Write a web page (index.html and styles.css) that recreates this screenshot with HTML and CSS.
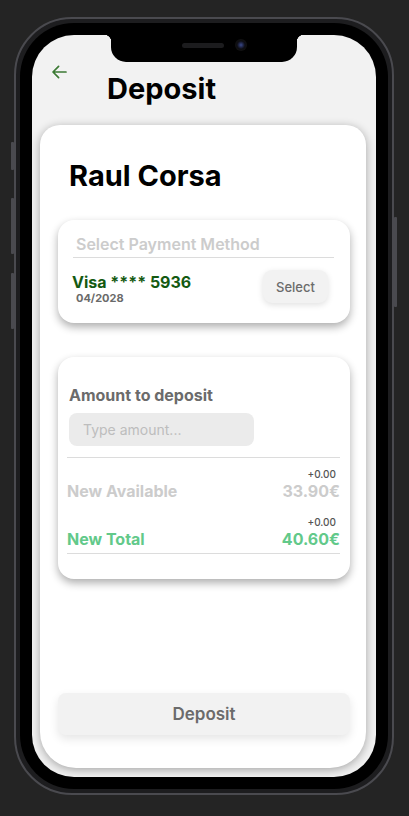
FILE: index.html
```html
<!DOCTYPE html>
<html lang="en">
<head>
<meta charset="utf-8">
<title>Deposit</title>
<link rel="stylesheet" href="styles.css">
</head>
<body>
<div class="phone">
  <span class="side-btn side-l1"></span>
  <span class="side-btn side-l2"></span>
  <span class="side-btn side-l3"></span>
  <span class="side-btn side-r1"></span>
  <div class="bezel">
    <div class="screen">
      <div class="notch"><span class="speaker"></span><span class="camera"></span></div>
      <header class="header">
        <svg class="back" viewBox="0 0 16 14" width="16" height="14" aria-hidden="true">
          <path d="M15 7H2.2M7.6 1.4 2 7l5.6 5.6" fill="none" stroke="#3c7a34" stroke-width="1.7" stroke-linecap="round" stroke-linejoin="round"/>
        </svg>
        <h1 class="title">Deposit</h1>
      </header>
      <main class="panel">
        <h2 class="name">Raul Corsa</h2>
        <section class="card pay">
          <div class="pay-label">Select Payment Method</div>
          <div class="divider pay-div"></div>
          <div class="pay-row">
            <div class="pay-info">
              <div class="visa">Visa **** 5936</div>
              <div class="exp">04/2028</div>
            </div>
            <button class="select-btn">Select</button>
          </div>
        </section>
        <section class="card amount">
          <div class="amount-label">Amount to deposit</div>
          <input class="amount-input" type="text" placeholder="Type amount...">
          <div class="divider div-a"></div>
          <div class="sum-row avail">
            <span class="sum-label">New Available</span>
            <span class="sum-right"><span class="delta">+0.00</span><span class="sum-val">33.90€</span></span>
          </div>
          <div class="sum-row total">
            <span class="sum-label">New Total</span>
            <span class="sum-right"><span class="delta">+0.00</span><span class="sum-val">40.60€</span></span>
          </div>
          <div class="divider div-b"></div>
        </section>
        <button class="deposit-btn">Deposit</button>
      </main>
    </div>
  </div>
</div>
</body>
</html>
```
FILE: styles.css
```css
* { box-sizing: border-box; }
html, body { margin: 0; padding: 0; }
body {
  background: #242424;
  font-family: Inter, "Noto Sans", "Liberation Sans", sans-serif;
  width: 409px;
  height: 816px;
  overflow: hidden;
}
.phone {
  position: relative;
  margin: 17px 0 0 14px;
  width: 380px;
  height: 778px;
  border: 2px solid #4a4a4f;
  border-radius: 58px;
  background: #1d1d1f;
  padding: 4px;
}
.side-btn {
  position: absolute;
  width: 3px;
  background: #4a4a4f;
  border-radius: 1px;
}
.side-l1 { left: -5px; top: 123px; height: 28px; }
.side-l2 { left: -5px; top: 179px; height: 56px; }
.side-l3 { left: -5px; top: 254px; height: 56px; }
.side-r1 { right: -5px; top: 198px; height: 90px; }
.bezel {
  width: 368px;
  height: 766px;
  background: #000;
  border-radius: 54px;
  padding: 12px;
}
.screen {
  position: relative;
  width: 344px;
  height: 742px;
  background: #f2f2f2;
  border-radius: 42px;
  overflow: hidden;
  display: flex;
  flex-direction: column;
  padding: 30px 10px 9px 8px;
}
.notch {
  position: absolute;
  left: 79px;
  top: 0;
  width: 186px;
  height: 27px;
  background: #000;
  border-radius: 0 0 15px 15px;
}
.notch::before, .notch::after {
  content: "";
  position: absolute;
  top: 0;
  width: 7px;
  height: 7px;
}
.notch::before { left: -7px; background: radial-gradient(circle at 0 100%, transparent 7px, #000 7.5px); }
.notch::after { right: -7px; background: radial-gradient(circle at 100% 100%, transparent 7px, #000 7.5px); }
.speaker {
  position: absolute;
  left: 71px;
  top: 8px;
  width: 42px;
  height: 5px;
  border-radius: 3px;
  background: #1c1c1e;
}
.camera {
  position: absolute;
  left: 124px;
  top: 4px;
  width: 12px;
  height: 12px;
  border-radius: 50%;
  background: radial-gradient(circle at 50% 50%, #3a4a8a 0, #1d2240 2.5px, #0d0d12 4px, #111 6px);
}
.header {
  display: flex;
  align-items: flex-start;
  padding-left: 11px;
  height: 60px;
}
.back { display: block; flex: none; }
.title {
  margin: 6px 0 0 40px;
  font-size: 29px;
  line-height: 35px;
  font-weight: 700;
  color: #000;
}
.panel {
  flex: 1;
  background: #fff;
  border-radius: 20px 20px 36px 36px;
  box-shadow: 0 2px 10px rgba(0,0,0,0.32);
  display: flex;
  flex-direction: column;
  padding: 33px 16px 33px 18px;
}
.name {
  margin: 0 0 27px 11px;
  font-size: 29px;
  line-height: 35px;
  font-weight: 700;
  color: #000;
}
.card {
  background: #fff;
  border-radius: 16px;
  box-shadow: 0 4px 9px rgba(0,0,0,0.32);
}
.pay { padding: 14px 16px 19px 15px; }
.pay-label {
  padding-left: 3px;
  font-size: 16px;
  line-height: 20px;
  font-weight: 600;
  color: #cccccc;
}
.divider { height: 1px; background: #dcdcdc; }
.pay-div { margin-top: 3px; }
.pay-row {
  margin-top: 12px;
  display: flex;
  justify-content: space-between;
  align-items: flex-start;
  padding-right: 6px;
}
.pay-info { padding-top: 3px; margin-left: -1px; }
.visa {
  font-size: 16px;
  line-height: 18px;
  font-weight: 700;
  color: #145a12;
}
.exp {
  margin-top: 1px;
  padding-left: 4px;
  font-size: 11px;
  line-height: 12px;
  font-weight: 700;
  color: #6a6a6a;
}
.select-btn {
  width: 65px;
  height: 33px;
  border: none;
  border-radius: 9px;
  background: #f2f2f2;
  box-shadow: 0 2px 6px rgba(0,0,0,0.12);
  font-family: inherit;
  font-size: 13px;
  font-weight: 500;
  color: #6b6b6b;
  padding: 0;
}
.amount { margin-top: 34px; padding: 28px 10px 25px 9px; }
.amount-label {
  padding-left: 2px;
  font-size: 16px;
  line-height: 20px;
  font-weight: 700;
  color: #6b6b6b;
}
.amount-input {
  display: block;
  margin: 8px 0 0 2px;
  width: 185px;
  height: 33px;
  border: none;
  outline: none;
  border-radius: 8px;
  background: #ebebeb;
  padding: 0 14px;
  font-family: inherit;
  font-size: 14px;
  color: #333;
}
.amount-input::placeholder { color: #bdbdbd; }
.div-a { margin-top: 11px; }
.sum-row {
  display: flex;
  justify-content: space-between;
  align-items: flex-end;
  margin-top: 10px;
}
.sum-row.total { margin-top: 15px; }
.sum-label {
  font-size: 16px;
  line-height: 20px;
  font-weight: 700;
}
.sum-right {
  display: flex;
  flex-direction: column;
  align-items: flex-end;
}
.delta {
  font-size: 10px;
  line-height: 13px;
  font-weight: 500;
  color: #555;
  padding-right: 4px;
}
.sum-val {
  font-size: 16px;
  line-height: 20px;
  font-weight: 700;
}
.avail .sum-label, .avail .sum-val { color: #cccccc; }
.total .sum-label, .total .sum-val { color: #62c98a; }
.div-b { margin-top: 4px; }
.deposit-btn {
  margin-top: auto;
  height: 42px;
  border: none;
  border-radius: 8px;
  background: #f2f2f2;
  box-shadow: 0 4px 10px rgba(0,0,0,0.1);
  font-family: inherit;
  font-size: 17px;
  font-weight: 600;
  color: #6b6b6b;
}
```
